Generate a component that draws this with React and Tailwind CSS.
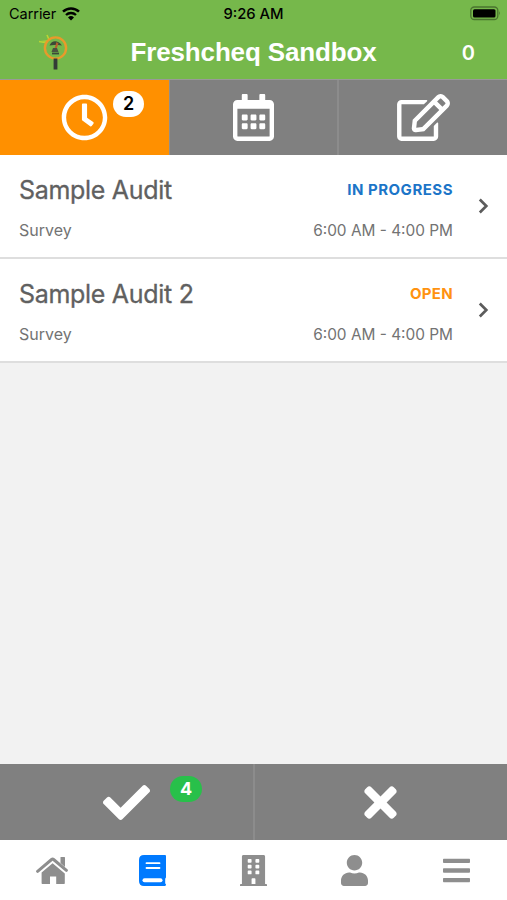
import React, { useState } from "react";
import {
  FaRegClock,
  FaRegCalendarAlt,
  FaRegEdit,
  FaCheck,
  FaTimes,
  FaBuilding,
  FaUser,
  FaBars,
} from "react-icons/fa";

const audits = [
  {
    id: 1,
    name: "Sample Audit",
    type: "Survey",
    status: "IN PROGRESS",
    statusClass: "text-[#1c75c8] tracking-[0.5px]",
    time: "6:00 AM - 4:00 PM",
  },
  {
    id: 2,
    name: "Sample Audit 2",
    type: "Survey",
    status: "OPEN",
    statusClass: "text-[#ff9210] tracking-[0.3px]",
    time: "6:00 AM - 4:00 PM",
  },
];

// House with a chimney
const HomeIcon = ({ className }) => (
  <svg viewBox="0 0 32 28" className={className} fill="currentColor">
    <path d="M24.500 1.500q0-.5.5-.5h3.500q.5 0 .5.500v9.500l-4.500-4z" />
    <path d="M1.600 15.300L15.600 3.500q1-.8 2 0L30.400 14.300" fill="none" stroke="currentColor" strokeWidth="3" strokeLinecap="round" />
    <path d="M16.600 7.200L5.600 16.600V27.300q0 .7.700.7H14v-7.500h6.200V28h7.900q.7 0 .7-.7V17.400z" />
  </svg>
);

const BookIcon = ({ className }) => (
  <svg viewBox="0 0 27 31" className={className}>
    <path
      d="M5 0H26q1 0 1 1V22q0 1-.8 1.500v5q.8.300.8 1.300T26 31H5q-5 0-5-5V5Q0 0 5 0z"
      fill="currentColor"
    />
    <path d="M7.500 8.200h13M7.500 13h13" stroke="white" strokeWidth="1.800" strokeLinecap="round" />
    <path d="M5.500 25.200H21.500" stroke="white" strokeWidth="4" strokeLinecap="round" />
  </svg>
);

const ChevronRight = ({ className }) => (
  <svg viewBox="0 0 11 16" className={className} fill="none" stroke="currentColor" strokeWidth="2.700">
    <path d="M1.800 1.500L8.300 8l-6.500 6.500" />
  </svg>
);

const navItems = [
  { key: "home", label: "Home", Icon: HomeIcon, size: "ml-[2px] w-8 h-7" },
  { key: "audits", label: "Audits", Icon: BookIcon, size: "w-[27px] h-[31px]" },
  { key: "sites", label: "Sites", Icon: FaBuilding, size: "w-[27px] h-[31px]" },
  { key: "profile", label: "Profile", Icon: FaUser, size: "w-[27px] h-[31px]" },
  { key: "menu", label: "Menu", Icon: FaBars, size: "w-[27px] h-[31px]" },
];

// Magnifying glass logo with a leaf
const Logo = () => (
  <svg viewBox="0 0 32 38" className="w-8 h-[38px]" fill="none">
    <path d="M1 8.500l8 1.200M9 2l2.200 5" stroke="#b9d634" strokeWidth="1.600" />
    <path d="M2 8l8-1-1 3z" fill="#a5cf3c" />
    <path d="M11.500 12.500c2-5 8-6 12.500 0l-4-.5h-4z" fill="#3b4a38" />
    <path d="M18.500 9l2 1.500-3 8h-2z" fill="#b5602c" />
    <path d="M15 15h4l1.500 4h-7z" fill="#4a5140" />
    <path d="M14 20.500h7" stroke="#3b4a38" strokeWidth="1.800" />
    <circle cx="17.500" cy="15" r="10.600" stroke="#e89a2b" strokeWidth="2.400" />
    <path d="M17.500 25.500v11" stroke="#333b36" strokeWidth="3.800" />
  </svg>
);

const StatusBar = () => (
  <div className="grid grid-cols-3 items-center h-7 pl-[9px] pr-[6px] text-black">
    <div className="flex items-center gap-[6px]">
      <span className="text-[14.5px] leading-none tracking-[-0.05px]">Carrier</span>
      <svg viewBox="0 0 18 14" className="w-[18px] h-[14px]" fill="none" stroke="black">
        <path d="M1 4.700a11.500 11.500 0 0 1 16 0" strokeWidth="2.500" />
        <path d="M4 8a7.200 7.200 0 0 1 10 0" strokeWidth="2.300" />
        <path d="M9 13.500L6 10.500a4.300 4.300 0 0 1 6 0z" fill="black" stroke="none" />
      </svg>
    </div>
    <span className="-ml-[3px] text-center text-[14.8px] leading-none font-medium">
      9:26 AM
    </span>
    <div className="flex justify-end pb-[2px]">
      <svg viewBox="0 0 31 15" className="w-[31px] h-[15px]">
        <rect x="0.800" y="1" width="27" height="12.500" rx="3.500" fill="none" stroke="#4a742f" strokeWidth="1.300" />
        <rect x="3" y="3.200" width="22.500" height="8.200" rx="1.500" fill="black" />
        <path d="M29 5v4.500q1.800-2.200 0-4.500" fill="#4a742f" />
      </svg>
    </div>
  </div>
);

const AuditRow = ({ audit }) => (
  <li className="flex items-center h-[104px] pl-[19px] pr-[18px] bg-white border-b-2 border-[#dedede] text-[#606060]">
    <div className="flex-1 pt-[7px]">
      <div className="flex items-center justify-between h-10">
        <h2 className="pt-px text-[25px] leading-none tracking-[-0.3px] [-webkit-text-stroke:0.3px]">
          {audit.name}
        </h2>
        <span className={`text-[15px] leading-none font-bold ${audit.statusClass}`}>
          {audit.status}
        </span>
      </div>
      <div className="flex items-center justify-between h-10 text-[#737373]">
        <span className="text-[16px] leading-none">{audit.type}</span>
        <span className="pt-[2px] text-[15.4px] leading-none">{audit.time}</span>
      </div>
    </div>
    <ChevronRight className="ml-[25px] w-[11px] h-4 text-[#5c5c5c]" />
  </li>
);

export default function App() {
  const [activeNav, setActiveNav] = useState("audits");

  return (
    <div className="flex flex-col w-full h-screen bg-[#f2f2f2] font-[Inter,sans-serif] overflow-hidden">
      <header className="h-[79px] shrink-0 bg-[#76b84b]">
        <StatusBar />
        <div className="grid grid-cols-[100px_1fr_100px] items-center h-[48px]">
          <div className="pl-[38px]">
            <Logo />
          </div>
          <h1 className="text-center text-white font-bold text-[26px] tracking-[-0.15px] leading-none whitespace-nowrap font-['Liberation_Sans',sans-serif]">
            Freshcheq Sandbox
          </h1>
          <span className="pr-8 pt-px text-right text-white font-semibold text-[20px] leading-none">
            0
          </span>
        </div>
      </header>

      {/* Top tabs */}
      <div className="flex h-[76px] shrink-0 border-t border-[#999] bg-[#808080] text-white">
        <button className="relative flex w-[169px] items-center justify-center bg-[#ff9000]">
          <FaRegClock className="w-[47px] h-[47px]" />
          <span className="absolute left-[113px] top-[11px] flex items-center justify-center w-[31px] h-[26px] rounded-full bg-white text-black text-[18px] font-semibold leading-none">
            2
          </span>
        </button>
        <button className="flex w-[168px] items-center justify-center border-l border-[#8f8f8f]">
          <FaRegCalendarAlt className="w-[41px] h-[47px]" />
        </button>
        <button className="flex flex-1 items-center justify-center border-l-2 border-[#8c8c8c]">
          <FaRegEdit className="w-[53px] h-[47px]" />
        </button>
      </div>

      <ul className="flex-1">
        {audits.map((audit) => (
          <AuditRow key={audit.id} audit={audit} />
        ))}
      </ul>

      {/* Complete / missed filters */}
      <div className="flex h-[76px] shrink-0 bg-[#808080] text-white">
        <button className="relative flex flex-1 items-center justify-center">
          <FaCheck className="w-[47px] h-[47px]" />
          <span className="absolute left-[170px] top-[12px] flex items-center justify-center w-8 h-[26px] rounded-full bg-[#28c04a] text-[18px] font-bold leading-none">
            4
          </span>
        </button>
        <button className="flex flex-1 items-center justify-center border-l-2 border-[#8c8c8c]">
          <FaTimes className="w-[33px] h-[47px]" />
        </button>
      </div>

      <nav className="flex h-[60px] shrink-0 bg-white">
        {navItems.map(({ key, label, Icon, size }) => (
          <button
            key={key}
            aria-label={label}
            onClick={() => setActiveNav(key)}
            className={`flex flex-1 items-center justify-center ${
              activeNav === key ? "text-[#007aff]" : "text-[#8e8e8e]"
            }`}
          >
            <Icon className={size} />
          </button>
        ))}
      </nav>
    </div>
  );
}
